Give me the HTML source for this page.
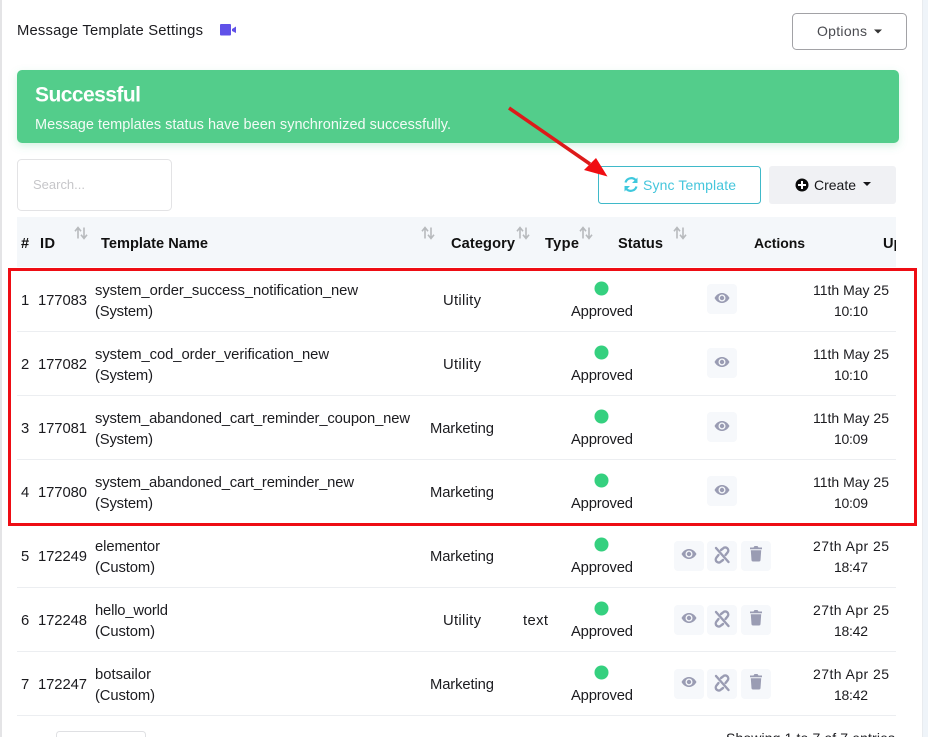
<!DOCTYPE html>
<html><head><meta charset="utf-8"><title>Message Template Settings</title>
<style>
html,body{margin:0;padding:0;background:#fff;width:928px;height:737px;overflow:hidden}
svg{display:block}
text{font-family:"Liberation Sans",sans-serif;font-size:14.8px;fill:#1b1b1f}
.b{font-weight:700;fill:#111;font-size:14.6px}
.d{font-size:14px}
.btn{fill:#f6f8fb}
.ic{fill:#9a9cb3}
</style></head><body>
<svg width="928" height="737" viewBox="0 0 928 737" xmlns="http://www.w3.org/2000/svg">
<defs>
<filter id="s" x="-5%" y="-30%" width="110%" height="160%"><feDropShadow dx="0" dy="3" stdDeviation="4" flood-color="#52cd8b" flood-opacity=".25"/></filter>
<clipPath id="hc"><rect x="17" y="217" width="879" height="50"/></clipPath>
<g id="sort" fill="none" stroke="#b7babd" stroke-width="1.600"><path d="M-3 5.500V-5M-6-1.800L-3-5.500L0-1.800"/><path d="M3-5.500V5M0 1.800L3 5.500L6 1.800"/></g>
<g id="eye"><path class="ic" fill-rule="evenodd" d="M-7.500 0C-5.500-3.800-2.500-5 0-5S5.500-3.800 7.500 0C5.500 3.800 2.500 5 0 5S-5.500 3.800-7.500 0ZM0-3.500A3.500 3.500 0 1 0 0 3.500A3.500 3.500 0 1 0 0-3.500Z"/><circle class="ic" cx="0" cy="0" r="2.200"/></g>
<g id="unlink" fill="none" stroke="#9a9cb3" stroke-width="2.400" stroke-linecap="round"><path d="M-6-7L6.500 7"/><path d="M-1-5L1-6.500A3 3 0 0 1 5.500-2.500L3.500 0"/><path d="M1 5L-1 6.500A3 3 0 0 1-5.500 2.500L-3.500 0"/></g>
<g id="trash"><path class="ic" d="M-6-6.500H-2.500L-1.500-8H1.500L2.500-6.500H6V-4.800H-6ZM-5.200-3.800H5.200L4.500 6.300Q4.400 7.500 3.200 7.500H-3.200Q-4.400 7.500-4.500 6.300Z"/></g>
<g id="st"><circle cx="601.500" cy="0.500" r="7" fill="#35d07f"/></g>
</defs>

<rect width="928" height="737" fill="#fff"/>
<rect x="0" y="0" width="2" height="737" fill="#e4e4e6"/>
<rect x="923" y="0" width="5" height="737" fill="#eff4f9"/>
<rect x="922" y="0" width="1" height="737" fill="#e8ebef"/>

<text x="17" y="35" textLength="186" lengthAdjust="spacing">Message Template Settings</text>
<path d="M220 25Q220 24 221 24H230Q231 24 231 25V34.500Q231 35.500 230 35.500H221Q220 35.500 220 34.500ZM232 29L236 26.500V33L232 31Z" fill="#6051e8"/>

<rect x="792.500" y="13.500" width="114" height="36" rx="4" fill="#fff" stroke="#a2a2a6"/>
<text x="817" y="36" textLength="50" lengthAdjust="spacing" style="font-size:14px;fill:#4a4b50">Options</text>
<path d="M874 29.500H882L878 33.500Z" fill="#333"/>

<rect x="17" y="70" width="882" height="73" rx="5" fill="#52cd8b" filter="url(#s)"/>
<text x="35" y="101.500" textLength="106" lengthAdjust="spacing" style="font-size:21px;font-weight:700;fill:#fff">Successful</text>
<text x="35" y="129" textLength="416" lengthAdjust="spacing" style="font-size:14.500px;fill:#f3fbf6">Message templates status have been synchronized successfully.</text>

<rect x="17.500" y="159.500" width="154" height="51" rx="4" fill="#fff" stroke="#e3e3e5"/>
<text x="33" y="189" textLength="52" lengthAdjust="spacing" style="font-size:13px;fill:#c6c6c9">Search...</text>

<rect x="598.500" y="166.500" width="162" height="37" rx="3" fill="#fff" stroke="#3fb9c9"/>
<g fill="none" stroke="#3fc8dd" stroke-width="2.200"><path d="M625.500 182.500A6 6 0 0 1 636 180.500"/><path d="M636.500 186.500A6 6 0 0 1 626 188.500"/></g>
<path d="M637.500 177.500V183H632ZM624.500 191.500V186H630Z" fill="#3fc8dd"/>
<text class="d" x="643" y="190" textLength="93" lengthAdjust="spacing" style="fill:#45c6dc">Sync Template</text>

<rect x="769" y="166" width="127" height="38" rx="3" fill="#f0f1f4"/>
<circle cx="802" cy="185" r="6.500" fill="#0b0b0b"/><path d="M802 181V189M798 185H806" stroke="#fff" stroke-width="2"/>
<text class="d" x="814" y="190" textLength="42" lengthAdjust="spacing" style="fill:#17171a">Create</text>
<path d="M863 182H871L867 186Z" fill="#17171a"/>

<rect x="17" y="217" width="879" height="50" fill="#f4f7fa"/>
<g clip-path="url(#hc)">
<text class="b" x="21" y="248" textLength="9" lengthAdjust="spacing">#</text>
<text class="b" x="40" y="248" textLength="15" lengthAdjust="spacing">ID</text>
<text class="b" x="101" y="248" textLength="107" lengthAdjust="spacing">Template Name</text>
<text class="b" x="451" y="248" textLength="64" lengthAdjust="spacing">Category</text>
<text class="b" x="545" y="248" textLength="34" lengthAdjust="spacing">Type</text>
<text class="b" x="618" y="248" textLength="45" lengthAdjust="spacing">Status</text>
<text class="b" x="754" y="248" textLength="51" lengthAdjust="spacing" style="font-size:14px">Actions</text>
<text class="b" x="883" y="248">Updated</text>
</g>
<use href="#sort" x="81" y="233"/><use href="#sort" x="428" y="233"/><use href="#sort" x="523" y="233"/><use href="#sort" x="586" y="233"/><use href="#sort" x="680" y="233"/>

<!-- separators -->
<g fill="#eceef1"><rect x="17" y="331" width="879" height="1"/><rect x="17" y="395" width="879" height="1"/><rect x="17" y="459" width="879" height="1"/><rect x="17" y="523" width="879" height="1"/><rect x="17" y="587" width="879" height="1"/><rect x="17" y="651" width="879" height="1"/><rect x="17" y="715" width="879" height="1"/></g>

<!-- row 1 -->
<text x="21" y="305">1</text><text x="38" y="305" textLength="49" lengthAdjust="spacing">177083</text>
<text x="95" y="295" textLength="263" lengthAdjust="spacing">system_order_success_notification_new</text>
<text x="95" y="316" textLength="58" lengthAdjust="spacing">(System)</text>
<text x="443" y="305" textLength="38" lengthAdjust="spacing">Utility</text>
<use href="#st" y="288"/><text x="571" y="316" textLength="62" lengthAdjust="spacing">Approved</text>
<rect class="btn" x="707" y="284" width="30" height="30" rx="4"/><use href="#eye" x="722" y="298"/>
<text class="d" x="813" y="295" textLength="76" lengthAdjust="spacing">11th May 25</text><text class="d" x="834" y="316" textLength="34" lengthAdjust="spacing">10:10</text>

<!-- row 2 -->
<text x="21" y="369">2</text><text x="38" y="369" textLength="49" lengthAdjust="spacing">177082</text>
<text x="95" y="359" textLength="234" lengthAdjust="spacing">system_cod_order_verification_new</text>
<text x="95" y="380" textLength="58" lengthAdjust="spacing">(System)</text>
<text x="443" y="369" textLength="38" lengthAdjust="spacing">Utility</text>
<use href="#st" y="352"/><text x="571" y="380" textLength="62" lengthAdjust="spacing">Approved</text>
<rect class="btn" x="707" y="348" width="30" height="30" rx="4"/><use href="#eye" x="722" y="362"/>
<text class="d" x="813" y="359" textLength="76" lengthAdjust="spacing">11th May 25</text><text class="d" x="834" y="380" textLength="34" lengthAdjust="spacing">10:10</text>

<!-- row 3 -->
<text x="21" y="433">3</text><text x="38" y="433" textLength="49" lengthAdjust="spacing">177081</text>
<text x="95" y="423" textLength="315" lengthAdjust="spacing">system_abandoned_cart_reminder_coupon_new</text>
<text x="95" y="444" textLength="58" lengthAdjust="spacing">(System)</text>
<text x="430" y="433" textLength="64" lengthAdjust="spacing">Marketing</text>
<use href="#st" y="416"/><text x="571" y="444" textLength="62" lengthAdjust="spacing">Approved</text>
<rect class="btn" x="707" y="412" width="30" height="30" rx="4"/><use href="#eye" x="722" y="426"/>
<text class="d" x="813" y="423" textLength="76" lengthAdjust="spacing">11th May 25</text><text class="d" x="834" y="444" textLength="34" lengthAdjust="spacing">10:09</text>

<!-- row 4 -->
<text x="21" y="497">4</text><text x="38" y="497" textLength="49" lengthAdjust="spacing">177080</text>
<text x="95" y="487" textLength="259" lengthAdjust="spacing">system_abandoned_cart_reminder_new</text>
<text x="95" y="508" textLength="58" lengthAdjust="spacing">(System)</text>
<text x="430" y="497" textLength="64" lengthAdjust="spacing">Marketing</text>
<use href="#st" y="480"/><text x="571" y="508" textLength="62" lengthAdjust="spacing">Approved</text>
<rect class="btn" x="707" y="476" width="30" height="30" rx="4"/><use href="#eye" x="722" y="490"/>
<text class="d" x="813" y="487" textLength="76" lengthAdjust="spacing">11th May 25</text><text class="d" x="834" y="508" textLength="34" lengthAdjust="spacing">10:09</text>

<!-- row 5 -->
<text x="21" y="561">5</text><text x="38" y="561" textLength="49" lengthAdjust="spacing">172249</text>
<text x="95" y="551" textLength="65" lengthAdjust="spacing">elementor</text>
<text x="95" y="572" textLength="60" lengthAdjust="spacing">(Custom)</text>
<text x="430" y="561" textLength="64" lengthAdjust="spacing">Marketing</text>
<use href="#st" y="544"/><text x="571" y="572" textLength="62" lengthAdjust="spacing">Approved</text>
<rect class="btn" x="674" y="541" width="30" height="30" rx="4"/><use href="#eye" x="689" y="554"/>
<rect class="btn" x="707" y="541" width="30" height="30" rx="4"/><use href="#unlink" x="722" y="555"/>
<rect class="btn" x="741" y="541" width="30" height="30" rx="4"/><use href="#trash" x="756" y="554"/>
<text class="d" x="813" y="551" textLength="76" lengthAdjust="spacing">27th Apr 25</text><text class="d" x="834" y="572" textLength="34" lengthAdjust="spacing">18:47</text>

<!-- row 6 -->
<text x="21" y="625">6</text><text x="38" y="625" textLength="49" lengthAdjust="spacing">172248</text>
<text x="95" y="615" textLength="73" lengthAdjust="spacing">hello_world</text>
<text x="95" y="636" textLength="60" lengthAdjust="spacing">(Custom)</text>
<text x="443" y="625" textLength="38" lengthAdjust="spacing">Utility</text>
<text x="523" y="625" textLength="25" lengthAdjust="spacing">text</text>
<use href="#st" y="608"/><text x="571" y="636" textLength="62" lengthAdjust="spacing">Approved</text>
<rect class="btn" x="674" y="605" width="30" height="30" rx="4"/><use href="#eye" x="689" y="618"/>
<rect class="btn" x="707" y="605" width="30" height="30" rx="4"/><use href="#unlink" x="722" y="619"/>
<rect class="btn" x="741" y="605" width="30" height="30" rx="4"/><use href="#trash" x="756" y="618"/>
<text class="d" x="813" y="615" textLength="76" lengthAdjust="spacing">27th Apr 25</text><text class="d" x="834" y="636" textLength="34" lengthAdjust="spacing">18:42</text>

<!-- row 7 -->
<text x="21" y="689">7</text><text x="38" y="689" textLength="49" lengthAdjust="spacing">172247</text>
<text x="95" y="679" textLength="56" lengthAdjust="spacing">botsailor</text>
<text x="95" y="700" textLength="60" lengthAdjust="spacing">(Custom)</text>
<text x="430" y="689" textLength="64" lengthAdjust="spacing">Marketing</text>
<use href="#st" y="672"/><text x="571" y="700" textLength="62" lengthAdjust="spacing">Approved</text>
<rect class="btn" x="674" y="669" width="30" height="30" rx="4"/><use href="#eye" x="689" y="682"/>
<rect class="btn" x="707" y="669" width="30" height="30" rx="4"/><use href="#unlink" x="722" y="683"/>
<rect class="btn" x="741" y="669" width="30" height="30" rx="4"/><use href="#trash" x="756" y="682"/>
<text class="d" x="813" y="679" textLength="76" lengthAdjust="spacing">27th Apr 25</text><text class="d" x="834" y="700" textLength="34" lengthAdjust="spacing">18:42</text>

<!-- footer -->
<rect x="56.500" y="731.500" width="89" height="20" rx="3" fill="#fff" stroke="#dfe0e3"/>
<text class="d" x="726" y="743" textLength="169" lengthAdjust="spacing">Showing 1 to 7 of 7 entries</text>

<!-- annotations -->
<rect x="9.500" y="269.500" width="906" height="255" fill="none" stroke="#ee0d14" stroke-width="3"/>
<path d="M509 108L590 164" stroke="#dd1a1a" stroke-width="3.500" fill="none"/>
<path d="M607.500 176.500L584 170L596 158Z" fill="#f00d12"/>
</svg>
</body></html>
